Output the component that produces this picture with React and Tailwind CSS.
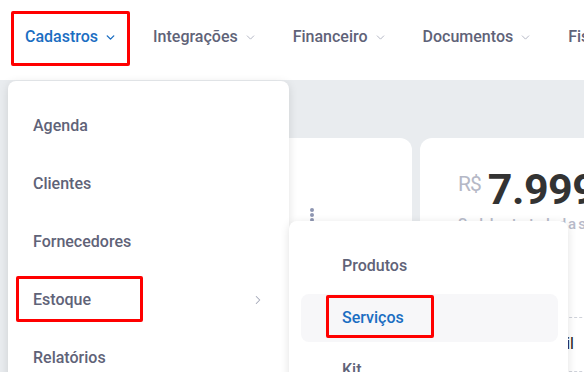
import { ChevronDown, ChevronRight } from 'lucide-react'

const navItems = ['Cadastros', 'Integrações', 'Financeiro', 'Documentos', 'Fiscal']
const menuItems = ['Agenda', 'Clientes', 'Fornecedores', 'Estoque', 'Relatórios']
const subItems = ['Produtos', 'Serviços', 'Kit']

const NavItem = ({ label, active }) => (
  <div className={`flex items-center gap-[6px] mr-[36px] text-[16px] font-medium ${active ? 'text-[#1b6ec2]' : 'text-[#5f6378]'}`}>
    <span>{label}</span>
    <ChevronDown className={`w-[13px] h-[13px] ${active ? 'text-[#1b6ec2]' : 'text-[#b3b6c4]'}`} strokeWidth={active ? 2.6 : 1.8} />
  </div>
)

const RedBox = ({ className }) => (
  <div className={`absolute border-[3px] border-[#ff0000] rounded-[2px] pointer-events-none ${className}`} />
)

export default function App() {
  return (
    <div className="relative w-[584px] h-[372px] overflow-hidden bg-[#e9ecef]" style={{ fontFamily: 'Roboto, "Noto Sans", sans-serif' }}>
      {/* top nav */}
      <header className="h-[80px] bg-white flex items-center pl-[25px] pb-[6px] whitespace-nowrap">
        {navItems.map((item, i) => (
          <NavItem key={item} label={item} active={i === 0} />
        ))}
      </header>

      {/* dashboard cards */}
      <div className="flex gap-[8px] pl-[16px] pt-[58px]">
        <div className="w-[396px] h-[260px] shrink-0 bg-white rounded-[12px] relative">
          <div className="absolute left-[294px] top-[70px] flex flex-col gap-[1px]">
            <span className="w-[4px] h-[4px] rounded-full bg-[#8e96b2]" />
            <span className="w-[4px] h-[4px] rounded-full bg-[#8e96b2]" />
            <span className="w-[4px] h-[4px] rounded-full bg-[#8e96b2]" />
          </div>
        </div>
        <div className="w-[300px] h-[260px] shrink-0 bg-white rounded-[12px] pl-[38px] pt-[28px]">
          <div className="flex items-start">
            <span className="text-[21px] text-[#b5b8c6] mt-[3px] mr-[7px] tracking-[-1px]">R$</span>
            <span className="text-[43px] font-bold text-[#333333] leading-[46px] tracking-[-0.5px]">7.999,00</span>
          </div>
          <div className="mt-[1px] text-[15px] font-medium text-[#b8bbca] tracking-[2px] whitespace-nowrap">Saldo total das contas</div>
          <div className="mt-[81px] w-[200px] border-t border-dashed border-[#cfd2da]" />
          <div className="h-[53px] flex items-center">
            <span className="w-[116px] text-right text-[16px] text-[#222]">Banco do Brasil</span>
          </div>
          <div className="w-[200px] border-t border-dashed border-[#cfd2da]" />
        </div>
      </div>

      {/* dropdown */}
      <div className="absolute left-[8px] top-[81px] w-[281px] h-[320px] bg-white rounded-[8px] shadow-[0_2px_10px_rgba(0,0,0,0.12)] pt-[16px]">
        {menuItems.map((item) => (
          <div key={item} className="h-[58px] flex items-center justify-between pl-[25px] pr-[24px] text-[16px] font-medium text-[#5f6378]">
            <span>{item}</span>
            {item === 'Estoque' && <ChevronRight className="w-[14px] h-[14px] text-[#a4a8b8]" strokeWidth={1.8} />}
          </div>
        ))}
      </div>

      {/* submenu */}
      <div className="absolute left-[289px] top-[221px] w-[279px] h-[200px] bg-white rounded-[8px] shadow-[0_2px_10px_rgba(0,0,0,0.12)] pt-[21px] pl-[12px] pr-[10px] flex flex-col gap-[4px]">
        {subItems.map((item) => (
          <div
            key={item}
            className={`h-[48px] flex items-center pl-[41px] rounded-[8px] text-[16px] font-medium ${item === 'Serviços' ? 'bg-[#f7f7f9] text-[#1b6ec2]' : 'text-[#5f6378]'}`}
          >
            {item}
          </div>
        ))}
      </div>

      {/* annotation boxes */}
      <RedBox className="left-[11px] top-[11px] w-[119px] h-[55px]" />
      <RedBox className="left-[16px] top-[276px] w-[127px] h-[46px]" />
      <RedBox className="left-[326px] top-[295px] w-[108px] h-[43px]" />
    </div>
  )
}
